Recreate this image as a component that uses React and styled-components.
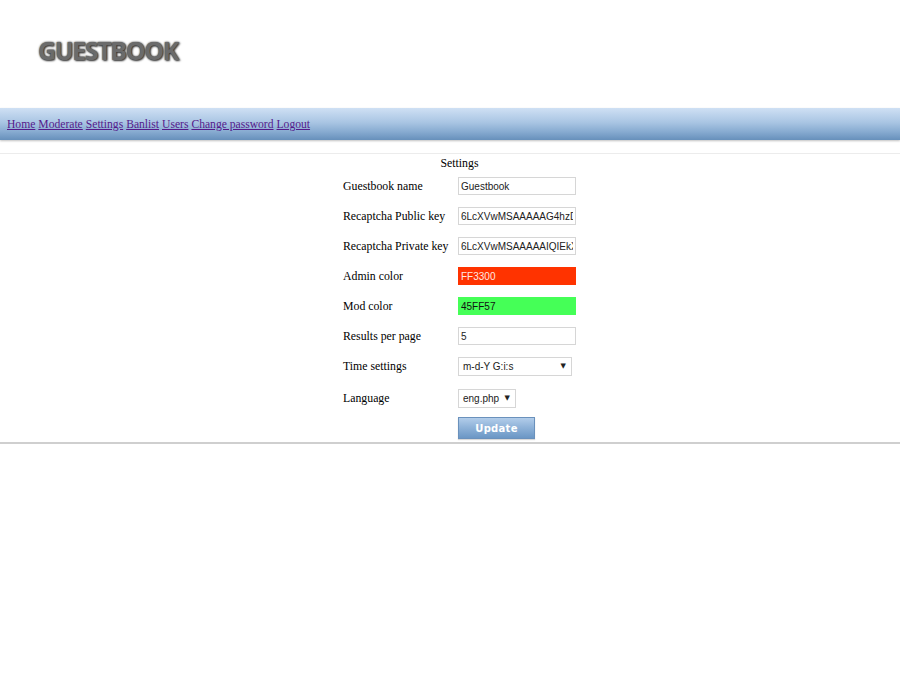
import React from "react";
import styled, { createGlobalStyle } from "styled-components";

const GlobalStyle = createGlobalStyle`
  html, body {
    margin: 0;
    padding: 0;
    background: #ffffff;
  }
  body {
    font-family: "Liberation Serif", "Times New Roman", serif;
    font-size: 11.8px;
    color: #000;
  }
`;

const Header = styled.header`
  height: 108px;
  display: flex;
  align-items: center;
  padding-left: 38px;
  box-sizing: border-box;
`;

const Logo = styled.h1`
  margin: 0;
  margin-top: -9px;
  font-family: "Open Sans", "Liberation Sans", sans-serif;
  font-weight: 700;
  font-size: 25px;
  letter-spacing: -1.4px;
  color: #6b6b6b;
  text-shadow: 0 0 2px #222, 1px 1px 2px #444;
`;

const NavBar = styled.nav`
  height: 32px;
  display: flex;
  align-items: center;
  gap: 3px;
  padding-left: 7px;
  background: linear-gradient(to bottom, #cfe0f4 0%, #a9c5e3 45%, #86aad0 75%, #6790bb 100%);
  box-shadow: 0 1px 2px rgba(0, 0, 0, 0.25);
`;

const NavLink = styled.a`
  color: #551a8b;
  text-decoration: underline;
  font-size: 11.6px;
  font-family: "Liberation Serif", "Times New Roman", serif;
`;

const Content = styled.section`
  margin-top: 13px;
  border-top: 1px solid #ececec;
  border-bottom: 2px solid #cfcfcf;
  padding: 1px 0 3px 19px;
  box-shadow: 0 1px 1px rgba(0, 0, 0, 0.06);
`;

const Caption = styled.div`
  text-align: center;
  line-height: 16px;
`;

const FormGrid = styled.div`
  display: grid;
  grid-template-columns: 115px 118px;
  grid-template-rows: repeat(7, 30px) 34px;
  width: 233px;
  margin: 0 auto;
  align-items: center;
`;

const Label = styled.label`
  white-space: nowrap;
  line-height: 14px;
  margin-top: -1px;
`;

const TextInput = styled.input`
  box-sizing: border-box;
  width: 118px;
  height: 18px;
  padding: 0 2px;
  border: 1px solid ${(p) => (p.$bg ? p.$bg : "#d6d6d6")};
  background: ${(p) => p.$bg || "#fff"};
  color: ${(p) => p.$fg || "#222"};
  font-family: "Liberation Sans", Arial, sans-serif;
  font-size: 10px;
  outline: none;
`;

const SelectWrap = styled.div`
  position: relative;
  width: ${(p) => p.$w}px;
  height: 19px;
`;

const Select = styled.select`
  appearance: none;
  -webkit-appearance: none;
  box-sizing: border-box;
  width: 100%;
  height: 100%;
  padding: 0 4px;
  border: 1px solid #d6d6d6;
  border-radius: 0;
  background: #fff;
  color: #222;
  font-family: "Liberation Sans", Arial, sans-serif;
  font-size: 10px;
`;

const Arrow = styled.span`
  position: absolute;
  right: 6px;
  top: 5px;
  font-size: 7px;
  color: #222;
  pointer-events: none;
  font-family: "DejaVu Sans", sans-serif;
`;

const ButtonRow = styled.div`
  display: grid;
  grid-template-columns: 115px 118px;
  width: 233px;
  margin: 0 auto;
  padding-top: 2px;
`;

const UpdateButton = styled.button`
  grid-column: 2;
  width: 77px;
  height: 22px;
  border: 1px solid #6a91bc;
  background: linear-gradient(to bottom, #b2cdea 0%, #90b3d9 45%, #6b97c5 100%);
  color: #fff;
  font-family: "DejaVu Sans", Verdana, sans-serif;
  font-weight: 700;
  font-size: 10px;
  letter-spacing: 0.3px;
  padding: 0;
  box-shadow: 0 1px 1px rgba(0, 0, 0, 0.15);
`;

const links = ["Home", "Moderate", "Settings", "Banlist", "Users", "Change password", "Logout"];

const fields = [
  { label: "Guestbook name", value: "Guestbook" },
  { label: "Recaptcha Public key", value: "6LcXVwMSAAAAAG4hzDlKx2f9" },
  { label: "Recaptcha Private key", value: "6LcXVwMSAAAAAIQIEkXn8sdQ" },
  { label: "Admin color", value: "FF3300", bg: "#ff3300", fg: "#ffe8e0" },
  { label: "Mod color", value: "45FF57", bg: "#45ff57", fg: "#111" },
  { label: "Results per page", value: "5" },
];

export default function App() {
  return (
    <>
      <GlobalStyle />
      <Header>
        <Logo>GUESTBOOK</Logo>
      </Header>
      <NavBar>
        {links.map((l) => (
          <NavLink key={l} href="#">
            {l}
          </NavLink>
        ))}
      </NavBar>
      <Content>
        <Caption>Settings</Caption>
        <FormGrid>
          {fields.map((f) => (
            <React.Fragment key={f.label}>
              <Label>{f.label}</Label>
              <TextInput defaultValue={f.value} $bg={f.bg} $fg={f.fg} />
            </React.Fragment>
          ))}
          <Label>Time settings</Label>
          <SelectWrap $w={114}>
            <Select defaultValue="m-d-Y G:i:s">
              <option>m-d-Y G:i:s</option>
            </Select>
            <Arrow>▼</Arrow>
          </SelectWrap>
          <Label>Language</Label>
          <SelectWrap $w={58}>
            <Select defaultValue="eng.php">
              <option>eng.php</option>
            </Select>
            <Arrow>▼</Arrow>
          </SelectWrap>
        </FormGrid>
        <ButtonRow>
          <UpdateButton>Update</UpdateButton>
        </ButtonRow>
      </Content>
    </>
  );
}
